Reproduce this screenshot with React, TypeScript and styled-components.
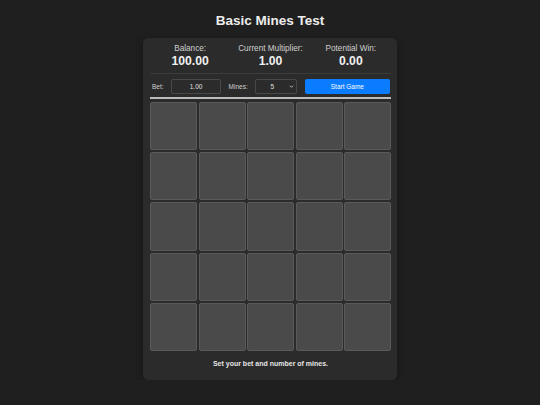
import React, { useState } from "react";
import styled, { createGlobalStyle } from "styled-components";

const GlobalStyle = createGlobalStyle`
  body {
    margin: 0;
    background: #1f1f1f;
    font-family: "Liberation Sans", Arial, sans-serif;
    color: #e6e6e6;
  }
`;

const Page = styled.div`
  display: flex;
  flex-direction: column;
  align-items: center;
  padding-top: 12px;
`;

const Title = styled.h1`
  margin: 0 0 9px;
  font-size: 13.5px;
  line-height: 17px;
  font-weight: bold;
  color: #ededed;
`;

const Panel = styled.div`
  box-sizing: border-box;
  width: 254px;
  padding: 0 6px 12px 7px;
  background: #2b2b2b;
  border-radius: 5px;
  box-shadow: 0 2px 6px rgba(0, 0, 0, 0.35);
`;

const Stats = styled.div`
  display: grid;
  grid-template-columns: repeat(3, 1fr);
  padding: 6px 0 5px;
  border-bottom: 1px solid #3b3b3b;
`;

const Stat = styled.div`
  display: flex;
  flex-direction: column;
  align-items: center;
`;

const StatLabel = styled.span`
  font-size: 8.2px;
  line-height: 10px;
  color: #cfcfcf;
`;

const StatValue = styled.span`
  font-size: 12.2px;
  line-height: 14px;
  font-weight: bold;
  color: #f0f0f0;
`;

const Controls = styled.div`
  display: flex;
  align-items: center;
  gap: 7.5px;
  margin-top: 5px;
  padding: 0 1px 3px 2px;
  border-bottom: 2px solid #bdbdbd;
`;

const Label = styled.label`
  font-size: 6.5px;
  color: #cfcfcf;
`;

const Field = styled.input`
  box-sizing: border-box;
  width: ${(p: { $w: number }) => p.$w}px;
  height: 15px;
  padding: 0;
  background: #2b2b2b;
  border: 1px solid #484848;
  border-radius: 2px;
  color: #e0e0e0;
  font-family: inherit;
  font-size: 6.5px;
  text-align: center;
  outline: none;
`;

const SelectWrap = styled.span`
  position: relative;
  display: inline-flex;
`;

const Select = styled.select`
  box-sizing: border-box;
  width: 42px;
  height: 15px;
  padding: 0 8px 0 0;
  appearance: none;
  background: #2b2b2b;
  border: 1px solid #484848;
  border-radius: 2px;
  color: #e0e0e0;
  font-family: inherit;
  font-size: 6.5px;
  text-align: center;
  text-align-last: center;
  outline: none;
`;

const Chevron = styled.svg`
  position: absolute;
  right: 3px;
  top: 5px;
  width: 5px;
  height: 5px;
  pointer-events: none;
`;

const StartButton = styled.button`
  flex: 1;
  height: 15px;
  padding: 0;
  background: #0a7cff;
  border: none;
  border-radius: 2px;
  color: #fff;
  font-family: inherit;
  font-size: 6.5px;
  cursor: pointer;
`;

const Grid = styled.div`
  display: grid;
  grid-template-columns: repeat(5, 1fr);
  grid-auto-rows: 48.2px;
  gap: 2px 1.5px;
  margin-top: 3px;
`;

const Tile = styled.button`
  padding: 0;
  background: #4a4a4a;
  border: 1px solid #5a5a5a;
  border-radius: 2px;
  cursor: pointer;
`;

const Status = styled.p`
  margin: 8px 0 0;
  font-size: 7px;
  line-height: 9px;
  font-weight: bold;
  text-align: center;
  color: #e6e6e6;
`;

export default function App() {
  const [bet, setBet] = useState("1.00");
  const [mines, setMines] = useState("5");

  return (
    <Page>
      <GlobalStyle />
      <Title>Basic Mines Test</Title>
      <Panel>
        <Stats>
          <Stat>
            <StatLabel>Balance:</StatLabel>
            <StatValue>100.00</StatValue>
          </Stat>
          <Stat>
            <StatLabel>Current Multiplier:</StatLabel>
            <StatValue>1.00</StatValue>
          </Stat>
          <Stat>
            <StatLabel>Potential Win:</StatLabel>
            <StatValue>0.00</StatValue>
          </Stat>
        </Stats>
        <Controls>
          <Label htmlFor="bet">Bet:</Label>
          <Field id="bet" $w={50} value={bet} onChange={(e) => setBet(e.target.value)} />
          <Label htmlFor="mines">Mines:</Label>
          <SelectWrap>
            <Select id="mines" value={mines} onChange={(e) => setMines(e.target.value)}>
              {Array.from({ length: 24 }, (_, i) => (
                <option key={i + 1} value={String(i + 1)}>
                  {i + 1}
                </option>
              ))}
            </Select>
            <Chevron viewBox="0 0 10 10">
              <path d="M2 3.5 L5 6.5 L8 3.5" fill="none" stroke="#e0e0e0" strokeWidth="1.6" />
            </Chevron>
          </SelectWrap>
          <StartButton>Start Game</StartButton>
        </Controls>
        <Grid>
          {Array.from({ length: 25 }, (_, i) => (
            <Tile key={i} aria-label={`tile ${i + 1}`} />
          ))}
        </Grid>
        <Status>Set your bet and number of mines.</Status>
      </Panel>
    </Page>
  );
}
